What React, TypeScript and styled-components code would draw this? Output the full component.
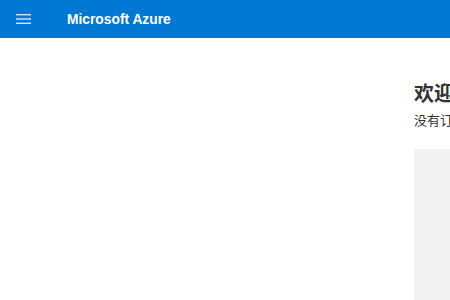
import styled, { createGlobalStyle } from "styled-components";

const GlobalStyle = createGlobalStyle`
  html, body {
    margin: 0;
    padding: 0;
    background: #ffffff;
    overflow: hidden;
  }
  body {
    font-family: "Liberation Sans", "Noto Sans CJK SC", sans-serif;
    color: #323130;
  }
`

const Page = styled.div`
  width: 100vw;
  height: 100vh;
  display: flex;
  flex-direction: column;
  overflow: hidden;
`

const TopBar = styled.header`
  height: 38px;
  flex-shrink: 0;
  background: #0078d4;
  display: flex;
  align-items: center;
`

const MenuButton = styled.button`
  width: 47px;
  height: 38px;
  padding: 0 0 0 16px;
  border: 0;
  background: transparent;
  display: flex;
  align-items: center;
  cursor: pointer;
`

const Brand = styled.div`
  margin-left: 20px;
  color: #ffffff;
  font-family: "Liberation Sans", sans-serif;
  font-weight: bold;
  font-size: 13.8px;
  white-space: nowrap;
`

const Main = styled.main`
  flex: 1;
  display: flex;
  padding-left: 414px;
  padding-top: 42px;
`

const Column = styled.section`
  width: 560px;
  flex-shrink: 0;
  display: flex;
  flex-direction: column;
`

const Heading = styled.h1`
  margin: 0;
  font-family: "Noto Sans CJK SC", sans-serif;
  font-size: 20px;
  line-height: 26px;
  font-weight: bold;
  color: #323130;
  white-space: nowrap;
`

const SubText = styled.p`
  margin: 4px 0 0;
  font-family: "Noto Sans CJK SC", sans-serif;
  font-size: 13px;
  line-height: 20px;
  color: #323130;
  white-space: nowrap;
`

const Panel = styled.div`
  margin-top: 19px;
  height: 400px;
  background: #f2f2f2;
  border-top: 1px solid #f7f7f7;
`

const MenuIcon = () => (
    <svg width="15" height="10" viewBox="0 0 15 10">
        <rect x="0" y="0" width="15" height="1.4" fill="#cfe4f7"/>
        <rect x="0" y="4.3" width="15" height="1.4" fill="#cfe4f7"/>
        <rect x="0" y="8.6" width="15" height="1.4" fill="#cfe4f7"/>
    </svg>
)

export default function App() {
    return (
        <Page>
            <GlobalStyle/>
            <TopBar>
                <MenuButton aria-label="菜单">
                    <MenuIcon/>
                </MenuButton>
                <Brand>Microsoft Azure</Brand>
            </TopBar>
            <Main>
                <Column>
                    <Heading>欢迎使用 Azure!</Heading>
                    <SubText>没有订阅？请查看下列选项。</SubText>
                    <Panel/>
                </Column>
            </Main>
        </Page>
    )
}
